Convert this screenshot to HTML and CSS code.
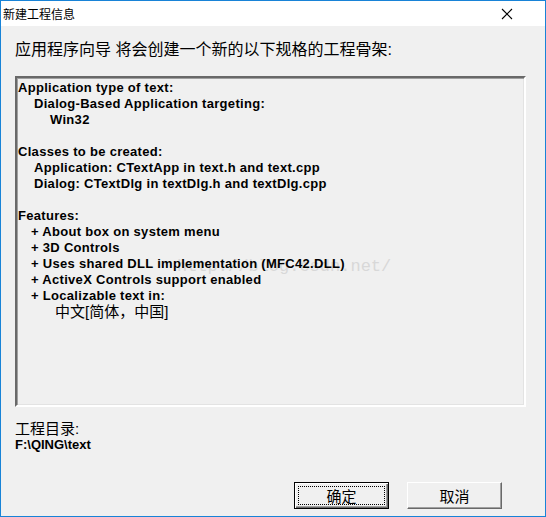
FILE: index.html
```html
<!DOCTYPE html>
<html lang="zh-cn">
<head>
    <meta http-equiv="Content-Type" content="text/html; charset=UTF-8"/>
    <title>新建工程信息</title>
    <link rel="stylesheet" href="styles.css">
</head>
<body>
<div class="window">
    <header class="titlebar">
        <span class="title">新建工程信息</span>
        <span class="close">
            <svg width="12" height="12" viewBox="0 0 12 12">
                <path d="M1 1 L11 11 M11 1 L1 11" stroke="#000" stroke-width="1.1" fill="none"/>
            </svg>
        </span>
    </header>
    <div class="content">
        <p class="intro">应用程序向导 将会创建一个新的以下规格的工程骨架:</p>

        <div class="info-box">
            <span class="watermark">http://blog.csdn.net/</span>
            <p>Application type of text:</p>
            <p class="ind1">Dialog-Based Application targeting:</p>
            <p class="ind2">Win32</p>
            <p>&nbsp;</p>
            <p>Classes to be created:</p>
            <p class="ind1">Application: CTextApp in text.h and text.cpp</p>
            <p class="ind1">Dialog: CTextDlg in textDlg.h and textDlg.cpp</p>
            <p>&nbsp;</p>
            <p>Features:</p>
            <p class="feat">+ About box on system menu</p>
            <p class="feat">+ 3D Controls</p>
            <p class="feat">+ Uses shared DLL implementation (MFC42.DLL)</p>
            <p class="feat">+ ActiveX Controls support enabled</p>
            <p class="feat">+ Localizable text in:</p>
            <p class="lang">中文[简体，中国]</p>
        </div>

        <div class="dir">
            <p class="dir-label">工程目录:</p>
            <p class="dir-path">F:\QING\text</p>
        </div>

        <div class="buttons">
            <button class="btn btn-default"><span class="focus">确定</span></button>
            <button class="btn">取消</button>
        </div>
    </div>
</div>
</body>
</html>
```

FILE: styles.css
```css
body {
    margin: 0;
    background: #f0f0f0;
    font-family: "Liberation Sans", "Noto Sans CJK SC", sans-serif;
}

p {
    margin: 0;
}

.window {
    width: 546px;
    height: 517px;
    box-sizing: border-box;
    border: 1px solid #1883d7;
    display: flex;
    flex-direction: column;
    background: #f0f0f0;
}

.titlebar {
    height: 25px;
    background: #fff;
    display: flex;
    align-items: center;
    justify-content: space-between;
}

.title {
    font-size: 12px;
    margin-left: 2px;
    color: #000;
}

.close {
    width: 12px;
    height: 12px;
    margin-right: 32px;
    display: flex;
}

.content {
    flex: 1;
    display: flex;
    flex-direction: column;
    padding: 14px 0 7px 14px;
}

.intro {
    font-size: 16px;
    line-height: 20px;
    color: #000;
}

.info-box {
    position: relative;
    margin-top: 16px;
    width: 505px;
    height: 325px;
    padding: 2px 1px 0 1px;
    border: 2px solid;
    border-color: #696969 #fff #fff #696969;
    box-shadow: inset 1px 1px 0 #a0a0a0, inset -1px -1px 0 #e3e3e3;
    font-size: 13px;
    font-weight: bold;
    letter-spacing: 0.3px;
    line-height: 16px;
    color: #000;
    overflow: hidden;
}

.info-box p {
    position: relative;
}

.info-box .ind1 {
    padding-left: 16px;
}

.info-box .ind2 {
    padding-left: 32px;
}

.info-box .feat {
    padding-left: 13px;
}

.info-box .lang {
    padding-left: 37px;
    font-size: 15px;
    font-weight: normal;
    letter-spacing: 0;
}

.watermark {
    position: absolute;
    left: 160px;
    top: 181px;
    font-family: "Liberation Mono", monospace;
    font-weight: normal;
    font-size: 17px;
    letter-spacing: 0;
    color: #d8d8d8;
}

.dir {
    margin-top: 13px;
}

.dir-label {
    font-size: 15px;
    line-height: 17px;
}

.dir-path {
    font-size: 13px;
    font-weight: bold;
    line-height: 15px;
}

.buttons {
    margin-top: auto;
    margin-right: 43px;
    display: flex;
    justify-content: flex-end;
    gap: 18px;
}

.btn {
    width: 95px;
    height: 27px;
    box-sizing: border-box;
    background: #f0f0f0;
    border: 1px solid;
    border-color: #fff #696969 #696969 #fff;
    box-shadow: inset -1px -1px 0 #a0a0a0;
    font-family: "Liberation Sans", "Noto Sans CJK SC", sans-serif;
    font-size: 15px;
    color: #000;
    padding: 0;
    outline: 0;
}

.btn-default {
    border: 1px solid #000;
    box-shadow: inset 1px 1px 0 #fff, inset -1px -1px 0 #696969, inset -2px -2px 0 #a0a0a0;
    padding: 3px;
}

.btn-default .focus {
    display: flex;
    align-items: center;
    justify-content: center;
    height: 100%;
    box-sizing: border-box;
    border: 1px dotted #000;
}
```
